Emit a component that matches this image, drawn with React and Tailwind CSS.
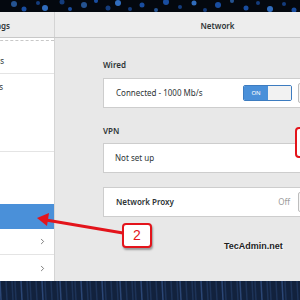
import React from "react";
import { ChevronRight, Settings } from "lucide-react";

const font = { fontFamily: '"Noto Sans", "DejaVu Sans", sans-serif' };

const Bokeh = () => (
  <svg width="300" height="12" className="block">
    <rect width="300" height="12" fill="#04080f" />
    {[
      [14, 4, 3], [24, 9, 2.5], [38, 3, 2], [45, 8, 3], [62, 2, 2.5], [70, 9, 2],
      [84, 5, 3], [96, 1, 2], [108, 8, 2.5], [118, 3, 3], [130, 9, 2], [142, 5, 2.5],
      [156, 10, 2], [166, 2, 3], [180, 7, 2], [194, 3, 2.5], [205, 10, 2], [218, 5, 3],
      [232, 1, 2], [246, 8, 2.5], [258, 3, 2], [270, 9, 3], [284, 4, 2], [294, 10, 2.5],
    ].map(([cx, cy, r], i) => (
      <circle key={i} cx={cx} cy={cy} r={r} fill={i % 3 ? "#1f5fc4" : "#3c86e8"} opacity={i % 2 ? 0.8 : 0.6} />
    ))}
  </svg>
);

const Streaks = () => (
  <svg width="300" height="19" className="block">
    <rect width="300" height="19" fill="#12223d" />
    {Array.from({ length: 60 }).map((_, i) => (
      <line key={i} x1={i * 5 + (i % 3)} y1="0" x2={i * 5 + (i % 3) + 1} y2="19" stroke={i % 4 ? "#1d3358" : "#2b4675"} strokeWidth="1.5" />
    ))}
  </svg>
);

const GearButton = () => (
  <div className="w-[24px] h-[20px] border border-[#bdbdbd] rounded-[2px] bg-[#f5f5f5] flex items-center justify-center text-[#555]">
    <Settings size={10} />
  </div>
);

const SideRow = ({ label, chevron, selected, border }) => (
  <div
    className={`flex items-center pl-[8px] pr-[7px] whitespace-nowrap ${
      selected ? "bg-[#4a90d9] text-white h-[25px]" : "text-[#2e3436] h-[26px]"
    } ${border ? "border-b border-[#e4e4e4]" : ""}`}
  >
    <span className="flex-1">{label}</span>
    {chevron && <ChevronRight size={9} className="text-[#555]" />}
  </div>
);

export default function App() {
  return (
    <div className="w-[300px] h-[300px] overflow-hidden relative bg-[#04080f] text-[8px]" style={font}>
      <Bokeh />

      {/* window */}
      <div className="w-[380px] h-[269px] flex flex-col bg-[#e8e8e8]">
        {/* header bar */}
        <div className="h-[26px] flex bg-[#ededed] border-b border-[#c8c8c8]">
          <div className="w-[55px] border-r border-[#d4d4d4] overflow-hidden">
            <div className="w-[120px] -ml-[66px] h-full flex items-center justify-center text-[#2e3436] font-semibold pt-[2px]">
              Settings
            </div>
          </div>
          <div className="flex-1 flex items-center justify-center font-semibold text-[#2e3436] pt-[2px]">
            Network
          </div>
        </div>

        <div className="flex-1 flex">
          {/* sidebar */}
          <div className="w-[55px] bg-white border-r border-[#d4d4d4] overflow-hidden">
            <div className="w-[120px] -ml-[66px]">
              <div className="h-[10px] pt-[2px]">
                <div className="border-t border-dashed border-[#c8c8c8]" />
              </div>
              <SideRow label="Universal Access" border />
              <SideRow label="Online Accounts" />
              <SideRow label="Privacy" />
              <SideRow label="Sharing" border />
              <SideRow label="Sound" />
              <SideRow label="Power" />
              <SideRow label="Network" selected />
              <SideRow label="Devices" chevron border />
              <SideRow label="Details" chevron />
            </div>
          </div>

          {/* content */}
          <div className="flex-1 pl-[48px] pt-[21px] text-[#2e3436]">
            <div className="w-[227px]">
              <div className="font-semibold h-[19px]">Wired</div>
              <div className="h-[30px] bg-white border border-[#cdcdcd] flex items-center pl-[12px] pr-[7px]">
                <span className="flex-1">Connected - 1000 Mb/s</span>
                <div className="w-[49px] h-[16px] flex border border-[#3d7cc0] rounded-[2px] overflow-hidden">
                  <div className="w-[24px] bg-[#4a90d9] text-white text-[6px] flex items-center justify-center">ON</div>
                  <div className="flex-1 bg-[#f2f2f2]" />
                </div>
                <div className="ml-[6px]">
                  <GearButton />
                </div>
              </div>

              <div className="font-semibold h-[35px] pt-[17px]">VPN</div>
              <div className="h-[30px] bg-white border border-[#cdcdcd] flex items-center pl-[11px]">
                Not set up
              </div>

              <div className="h-[30px] mt-[14px] bg-white border border-[#cdcdcd] flex items-center pl-[12px] pr-[7px]">
                <span className="flex-1 font-semibold">Network Proxy</span>
                <span className="text-[#9a9a9a]">Off</span>
                <div className="ml-[8px]">
                  <GearButton />
                </div>
              </div>
            </div>
          </div>
        </div>
      </div>

      <Streaks />

      {/* annotations */}
      <svg className="absolute left-0 top-0" width="300" height="300">
        <line x1="123" y1="233" x2="46" y2="220" stroke="#e3141b" strokeWidth="3" />
        <polygon points="37,218 49,213 47,226" fill="#e3141b" />
      </svg>
      <div className="absolute left-[122px] top-[223px] w-[30px] h-[25px] bg-white border-2 border-[#e3141b] rounded-[4px] shadow-[1px_2px_2px_rgba(0,0,0,0.35)] flex items-center justify-center text-[#e3141b] text-[14px]" style={{ fontFamily: '"Liberation Sans", sans-serif' }}>
        2
      </div>
      <div className="absolute left-[295px] top-[127px] w-[22px] h-[31px] bg-white border-2 border-[#e3141b] rounded-[4px]" />
      <div className="absolute left-[224px] top-[240px] font-bold text-[9px] text-[#1e1e1e] [text-shadow:1px_1px_1px_rgba(255,255,255,0.9)]" style={{ fontFamily: '"Liberation Sans", sans-serif' }}>
        TecAdmin.net
      </div>
    </div>
  );
}
